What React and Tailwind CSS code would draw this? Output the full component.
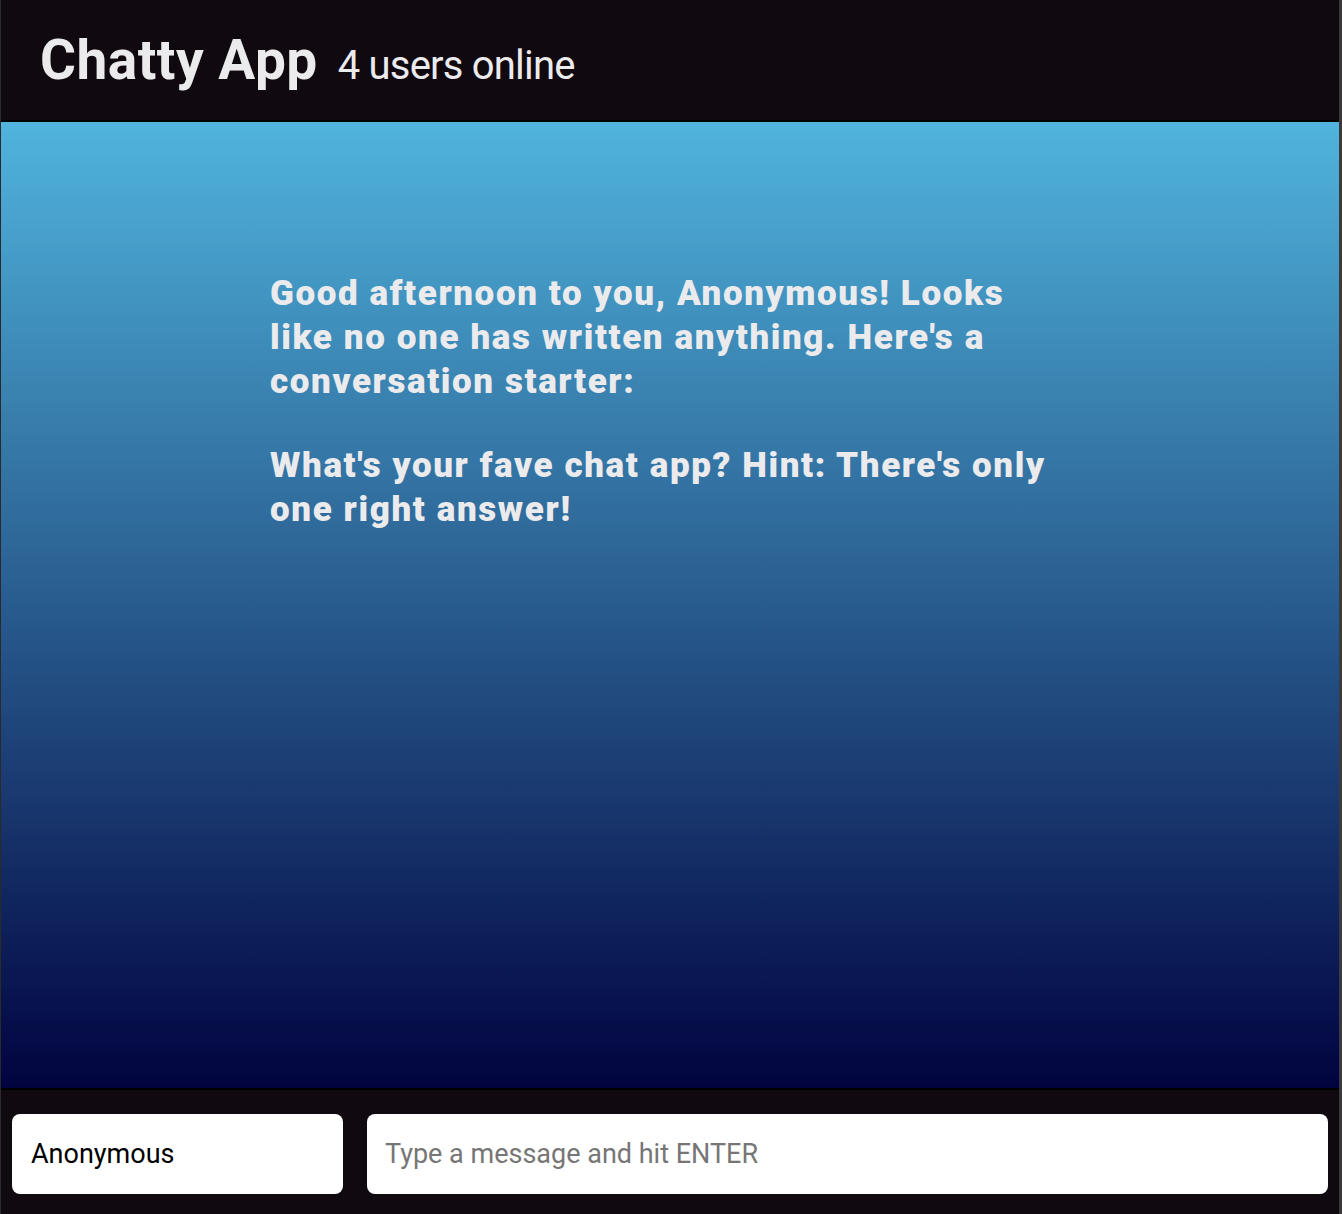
import React, { useState } from "react";

export default function App() {
  const [name, setName] = useState("Anonymous");
  const [message, setMessage] = useState("");

  return (
    <div
      className="flex flex-col h-[1214px] w-full bg-[#110910] border-r-[3px] border-r-[#3b3a3c] border-l border-l-[#2a2a2c]"
      style={{ fontFamily: "Roboto, 'Liberation Sans', sans-serif" }}
    >
      {/* top bar */}
      <nav className="flex items-baseline h-[122px] px-[39px] pt-[33px] bg-[#110910] border-b-[2px] border-black shrink-0">
        <h1 className="text-[55px] font-bold text-[#ebebed] tracking-[0.5px] leading-none">Chatty App</h1>
        <span className="ml-[20px] text-[40px] text-[#ebebed] tracking-[-0.8px] leading-none">4 users online</span>
      </nav>

      {/* messages */}
      <main className="flex-1 bg-[linear-gradient(to_bottom,#50b4dd,#01033f)] pt-[150px] pl-[269px]">
        <div className="text-[35px] font-black leading-[44px] text-[#ebebed] tracking-[1.6px]">
          <p>
            <span className="block whitespace-nowrap">Good afternoon to you, Anonymous! Looks</span>
            <span className="block whitespace-nowrap">like no one has written anything. Here's a</span>
            <span className="block whitespace-nowrap">conversation starter:</span>
          </p>
          <p className="mt-[40px]">
            <span className="block whitespace-nowrap">What's your fave chat app? Hint: There's only</span>
            <span className="block whitespace-nowrap">one right answer!</span>
          </p>
        </div>
      </main>

      {/* compose bar */}
      <footer className="flex items-center gap-[24px] h-[126px] px-[11px] pt-[4px] bg-[#110910] border-t-[2px] border-black shrink-0">
        <input
          value={name}
          onChange={e => setName(e.target.value)}
          className="w-[331px] h-[80px] px-[19px] text-[27px] text-black bg-white rounded-[8px] outline-none"
        />
        <input
          value={message}
          placeholder="Type a message and hit ENTER"
          onChange={e => setMessage(e.target.value)}
          className="flex-1 h-[80px] px-[18px] text-[27px] text-black bg-white rounded-[8px] outline-none placeholder:text-[#767676]"
        />
      </footer>
    </div>
  );
}
